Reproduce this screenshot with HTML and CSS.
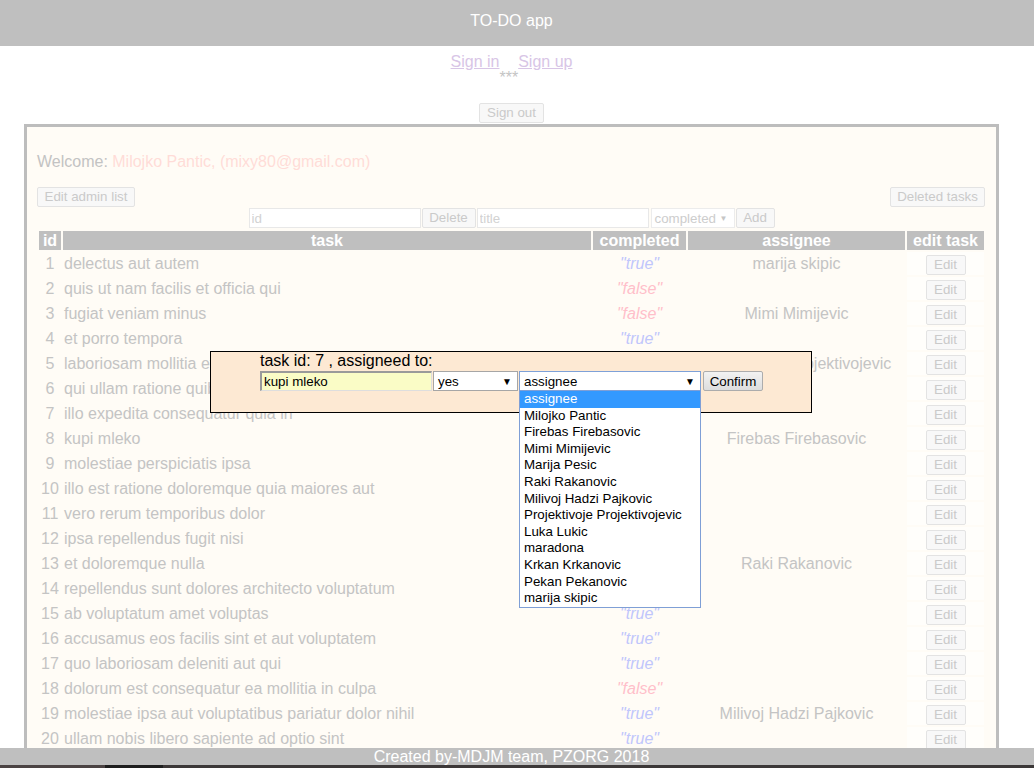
FILE: index.html
```html
<!DOCTYPE html>
<html>
<head>
<meta charset="utf-8">
<title>TO-DO app</title>
<link rel="stylesheet" href="styles.css">
</head>
<body>
<header class="topbar"><div class="topbar-title">TO-DO app</div></header>
<div class="page">
  <nav class="auth"><a href="#" class="auth-link">Sign in</a><span class="stars">***</span><a href="#" class="auth-link">Sign up</a></nav>
  <div class="signout-row"><button class="btn btn-signout">Sign out</button></div>
  <main class="panel">
    <p class="welcome">Welcome: <span class="user">Milojko Pantic, (mixy80@gmail.com)</span></p>
    <div class="toolbar">
      <button class="btn btn-admin">Edit admin list</button>
      <button class="btn btn-deleted">Deleted tasks</button>
    </div>
    <div class="addform">
      <input class="field" placeholder="id">
      <button class="btn btn-delete">Delete</button>
      <input class="field field-title" placeholder="title">
      <div class="fake-select"><span>completed</span><span class="arrow">▼</span></div>
      <button class="btn btn-add">Add</button>
    </div>
    <table class="tasks">
      <colgroup>
        <col class="c-id"><col class="c-task"><col class="c-done"><col class="c-who"><col class="c-edit">
      </colgroup>
      <thead>
        <tr><th>id</th><th>task</th><th>completed</th><th>assignee</th><th>edit task</th></tr>
      </thead>
      <tbody>
        <tr><td class="num">1</td><td>delectus aut autem</td><td class="yes">"true"</td><td class="who">marija skipic</td><td class="edit"><button class="btn btn-edit">Edit</button></td></tr>
        <tr><td class="num">2</td><td>quis ut nam facilis et officia qui</td><td class="no">"false"</td><td class="who"></td><td class="edit"><button class="btn btn-edit">Edit</button></td></tr>
        <tr><td class="num">3</td><td>fugiat veniam minus</td><td class="no">"false"</td><td class="who">Mimi Mimijevic</td><td class="edit"><button class="btn btn-edit">Edit</button></td></tr>
        <tr><td class="num">4</td><td>et porro tempora</td><td class="yes">"true"</td><td class="who"></td><td class="edit"><button class="btn btn-edit">Edit</button></td></tr>
        <tr><td class="num">5</td><td>laboriosam mollitia et enim quasi adipisci quia provident illum</td><td class="no">"false"</td><td class="who">Projektivoje Projektivojevic</td><td class="edit"><button class="btn btn-edit">Edit</button></td></tr>
        <tr><td class="num">6</td><td>qui ullam ratione quibusdam voluptatem quia omnis</td><td class="no">"false"</td><td class="who"></td><td class="edit"><button class="btn btn-edit">Edit</button></td></tr>
        <tr><td class="num">7</td><td>illo expedita consequatur quia in</td><td class="no">"false"</td><td class="who"></td><td class="edit"><button class="btn btn-edit">Edit</button></td></tr>
        <tr><td class="num">8</td><td>kupi mleko</td><td class="yes">"true"</td><td class="who">Firebas Firebasovic</td><td class="edit"><button class="btn btn-edit">Edit</button></td></tr>
        <tr><td class="num">9</td><td>molestiae perspiciatis ipsa</td><td class="no">"false"</td><td class="who"></td><td class="edit"><button class="btn btn-edit">Edit</button></td></tr>
        <tr><td class="num">10</td><td>illo est ratione doloremque quia maiores aut</td><td class="yes">"true"</td><td class="who"></td><td class="edit"><button class="btn btn-edit">Edit</button></td></tr>
        <tr><td class="num">11</td><td>vero rerum temporibus dolor</td><td class="yes">"true"</td><td class="who"></td><td class="edit"><button class="btn btn-edit">Edit</button></td></tr>
        <tr><td class="num">12</td><td>ipsa repellendus fugit nisi</td><td class="yes">"true"</td><td class="who"></td><td class="edit"><button class="btn btn-edit">Edit</button></td></tr>
        <tr><td class="num">13</td><td>et doloremque nulla</td><td class="no">"false"</td><td class="who">Raki Rakanovic</td><td class="edit"><button class="btn btn-edit">Edit</button></td></tr>
        <tr><td class="num">14</td><td>repellendus sunt dolores architecto voluptatum</td><td class="yes">"true"</td><td class="who"></td><td class="edit"><button class="btn btn-edit">Edit</button></td></tr>
        <tr><td class="num">15</td><td>ab voluptatum amet voluptas</td><td class="yes">"true"</td><td class="who"></td><td class="edit"><button class="btn btn-edit">Edit</button></td></tr>
        <tr><td class="num">16</td><td>accusamus eos facilis sint et aut voluptatem</td><td class="yes">"true"</td><td class="who"></td><td class="edit"><button class="btn btn-edit">Edit</button></td></tr>
        <tr><td class="num">17</td><td>quo laboriosam deleniti aut qui</td><td class="yes">"true"</td><td class="who"></td><td class="edit"><button class="btn btn-edit">Edit</button></td></tr>
        <tr><td class="num">18</td><td>dolorum est consequatur ea mollitia in culpa</td><td class="no">"false"</td><td class="who"></td><td class="edit"><button class="btn btn-edit">Edit</button></td></tr>
        <tr><td class="num">19</td><td>molestiae ipsa aut voluptatibus pariatur dolor nihil</td><td class="yes">"true"</td><td class="who">Milivoj Hadzi Pajkovic</td><td class="edit"><button class="btn btn-edit">Edit</button></td></tr>
        <tr><td class="num">20</td><td>ullam nobis libero sapiente ad optio sint</td><td class="yes">"true"</td><td class="who"></td><td class="edit"><button class="btn btn-edit">Edit</button></td></tr>
      </tbody>
    </table>
  </main>
</div>

<div class="modal">
  <div class="modal-inner">
    <div class="modal-label">task id: 7 , assigneed to:</div>
    <div class="modal-controls">
      <div class="m-input">kupi mleko</div>
      <div class="m-select m-select-yes">yes<span class="m-arrow">▼</span></div>
      <div class="m-select m-select-who">assignee<span class="m-arrow">▼</span>
        <ul class="dropdown">
          <li class="opt opt-active">assignee</li>
          <li class="opt">Milojko Pantic</li>
          <li class="opt">Firebas Firebasovic</li>
          <li class="opt">Mimi Mimijevic</li>
          <li class="opt">Marija Pesic</li>
          <li class="opt">Raki Rakanovic</li>
          <li class="opt">Milivoj Hadzi Pajkovic</li>
          <li class="opt">Projektivoje Projektivojevic</li>
          <li class="opt">Luka Lukic</li>
          <li class="opt">maradona</li>
          <li class="opt">Krkan Krkanovic</li>
          <li class="opt">Pekan Pekanovic</li>
          <li class="opt">marija skipic</li>
        </ul>
      </div>
      <button class="m-confirm">Confirm</button>
    </div>
  </div>
</div>

<footer class="footer">
  <div class="footer-bar"><div class="footer-text">Created by-MDJM team, PZORG 2018</div></div>
  <div class="footer-strip"><span class="strip-a"></span><span class="strip-b"></span></div>
</footer>
</body>
</html>
```

FILE: styles.css
```css
* { box-sizing: border-box; }

html, body {
  margin: 0;
  padding: 0;
  overflow: hidden;
}

body {
  width: 1034px;
  height: 768px;
  background: #ffffff;
  font-family: "Liberation Sans", Arial, sans-serif;
  font-size: 16px;
}

.topbar {
  height: 46px;
  background: #bfbfbf;
}

.topbar-title {
  width: 1023px;
  padding-top: 12px;
  line-height: 18px;
  text-align: center;
  color: #ffffff;
}

.page { width: 1023px; }

.auth {
  height: 57px;
  padding-top: 7px;
  line-height: 18px;
  text-align: center;
}

.auth-link {
  color: #d8c5e6;
  text-decoration: underline;
}

.stars {
  color: #c4c4c4;
  vertical-align: -16px;
}

.signout-row {
  display: flex;
  justify-content: center;
  height: 21px;
}

.btn {
  height: 20px;
  padding: 0;
  font-family: "Liberation Sans", Arial, sans-serif;
  font-size: 13.33px;
  line-height: 18px;
  color: #cacaca;
  background: #f8f8f8;
  border: 1px solid #e3e3e3;
  border-radius: 2px;
  text-align: center;
}

.btn-signout { width: 65px; }
.btn-admin { width: 98px; }
.btn-deleted { width: 95px; }
.btn-delete { width: 54px; margin-left: 1px; }
.btn-add { width: 39px; margin-left: 1px; }
.btn-edit { width: 40px; vertical-align: middle; }

.panel {
  height: 720px;
  margin: 0 24px;
  padding: 26px 10px 0 10px;
  background: #fffcf6;
  border: 3px solid #bdbdbd;
}

.welcome {
  margin: 0;
  line-height: 18px;
  color: #c3c3c3;
}

.user { color: #ffdcd8; }

.toolbar {
  display: flex;
  justify-content: space-between;
  margin-top: 16px;
  padding-right: 1px;
}

.addform {
  display: flex;
  justify-content: center;
  margin-top: 1px;
  height: 20px;
}

.field {
  width: 172px;
  height: 20px;
  padding: 1px 2px;
  font-family: "Liberation Sans", Arial, sans-serif;
  font-size: 13.33px;
  color: #c8c8c8;
  background: #ffffff;
  border: 1px solid #e8e8e8;
  outline: none;
}

.field::placeholder { color: #d2d2d2; }

.field-title { margin-left: 1px; }

.fake-select {
  display: flex;
  align-items: center;
  justify-content: space-between;
  width: 84px;
  height: 20px;
  margin-left: 2px;
  padding: 0 6px 0 3px;
  font-size: 13.33px;
  color: #cdcdcd;
  background: #ffffff;
  border: 1px solid #ececec;
}

.arrow { font-size: 8px; color: #c6c6c6; }

.tasks {
  width: 949px;
  margin-top: 1px;
  table-layout: fixed;
  border-spacing: 2px;
}

.c-id { width: 22px; }
.c-task { width: 528px; }
.c-done { width: 93px; }
.c-who { width: 217px; }
.c-edit { width: 77px; }

.tasks th {
  height: 19px;
  padding: 0;
  line-height: 19px;
  font-weight: bold;
  color: #ffffff;
  background: #bfbfbf;
}

.tasks td {
  height: 23px;
  padding: 0 1px;
  line-height: 23px;
  color: #c4c4c4;
  white-space: nowrap;
  overflow: hidden;
}

.tasks td.num { text-align: center; padding: 0; }
.tasks td.yes { text-align: center; font-style: italic; color: #c0c6fc; }
.tasks td.no { text-align: center; font-style: italic; color: #ffbfca; }
.tasks td.who { text-align: center; }
.tasks td.edit { text-align: center; background: #fffefb; }

/* modal overlay */
.modal {
  position: fixed;
  left: 210px;
  top: 351px;
  width: 602px;
  height: 62px;
  background: #fde9d3;
  border: 1px solid #000000;
  z-index: 5;
}

.modal-inner { padding-left: 49px; }

.modal-label {
  height: 19px;
  line-height: 18px;
  color: #000000;
}

.modal-controls {
  display: flex;
  height: 20px;
}

.m-input {
  width: 172px;
  height: 20px;
  padding: 1px 2px 0;
  font-size: 13.33px;
  line-height: 16px;
  color: #000000;
  background: #fafcc6;
  border-style: solid;
  border-width: 2px 1px 1px 2px;
  border-color: #9a9a9a #dedede #dedede #9a9a9a;
}

.m-select {
  position: relative;
  display: flex;
  align-items: center;
  justify-content: space-between;
  height: 20px;
  margin-left: 1px;
  padding: 0 5px 0 4px;
  font-size: 13.33px;
  color: #000000;
  background: #ffffff;
  border: 1px solid #a6a6a6;
}

.m-select-yes { width: 85px; }

.m-select-who {
  width: 182px;
  border-color: #7ea1d8;
}

.m-arrow { font-size: 10px; color: #000000; }

.dropdown {
  position: absolute;
  left: -1px;
  top: 18px;
  width: 182px;
  margin: 0;
  padding: 0;
  list-style: none;
  background: #ffffff;
  border: 1px solid #7f9fd6;
  z-index: 10;
}

.opt {
  height: 16.6px;
  padding-left: 4px;
  font-size: 13.33px;
  line-height: 16.6px;
  color: #000000;
  white-space: nowrap;
}

.opt-active {
  color: #ffffff;
  background: #3399ff;
}

.m-confirm {
  width: 60px;
  height: 20px;
  margin-left: 2px;
  padding: 0;
  font-family: "Liberation Sans", Arial, sans-serif;
  font-size: 13.33px;
  color: #000000;
  background: linear-gradient(#f2f2f2, #dddddd);
  border: 1px solid #acacac;
  border-radius: 2px;
}

/* fixed footer */
.footer {
  position: fixed;
  left: 0;
  bottom: 0;
  width: 1034px;
  z-index: 3;
}

.footer-bar {
  height: 17px;
  background: #bfbfbf;
}

.footer-text {
  width: 1023px;
  line-height: 17px;
  text-align: center;
  color: #ffffff;
}

.footer-strip {
  display: flex;
  height: 3px;
  background: #3c3838;
}

.strip-a { width: 105px; background: #4b4343; }
.strip-b { width: 58px; background: #1e1e1e; }
```
